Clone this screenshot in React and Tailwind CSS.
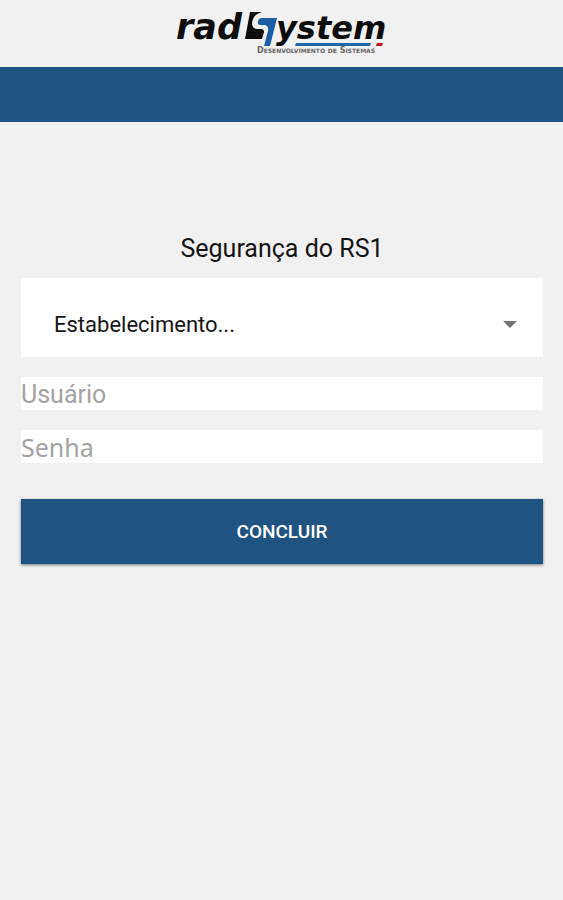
import React from "react";

function Logo() {
  return (
    <svg
      className="w-[225px] h-[60px] overflow-visible"
      viewBox="0 0 225 60"
      role="img"
      aria-label="RadSystem Desenvolvimento de Sistemas"
    >
      <g
        fontFamily="DejaVu Sans, sans-serif"
        fontWeight="bold"
        fontStyle="italic"
        fill="#0c0c0c"
      >
        <text x="7" y="39" fontSize="35">
          rad
        </text>
        <text x="107" y="39" fontSize="32">
          ystem
        </text>
      </g>
      {/* two-tone S */}
      <path
        d="M81 12H93Q86 14 84 19Q81 28 88 29H92Q95 29 95 32L93 39H76Z"
        fill="#0c0c0c"
      />
      <path
        d="M93 18H108L101 46H95L99 31Q100 26 96 25H91Q88 24 89 21Q90 18 93 18Z"
        fill="#1c5fa4"
      />
      <path d="M127 43h75l-1 3h-75z" fill="#2467a8" />
      <path d="M208 43h6l-1 3h-6z" fill="#c4161c" />
      <text
        x="88"
        y="53"
        fontFamily="DejaVu Sans, sans-serif"
        fontWeight="bold"
        fontSize="8"
        fill="#666"
        style={{ fontVariant: "small-caps" }}
      >
        Desenvolvimento de Sistemas
      </text>
    </svg>
  );
}

function App() {
  return (
    <div className="min-h-screen bg-[#f1f1f1] font-['Roboto',sans-serif]">
      <header>
        <div className="flex justify-center pb-[7px]">
          <Logo />
        </div>
        <div className="h-[55px] bg-[#1f5382]"></div>
      </header>

      <main className="pl-[21px] pr-5 pt-[110px]">
        <h1 className="text-center text-[25px] leading-[34px] text-[#151515]">
          Segurança do RS1
        </h1>

        <form className="mt-3" onSubmit={(e) => e.preventDefault()}>
          <div className="relative">
            <select
              aria-label="Estabelecimento"
              className="block w-full h-[79px] appearance-none bg-white pl-[33px] pr-16 pt-[14px] text-[22px] text-[#151515] outline-none"
            >
              <option>Estabelecimento...</option>
            </select>
            <svg
              className="pointer-events-none absolute right-[26px] top-[43px] w-[14px] h-[7px]"
              viewBox="0 0 14 7"
              fill="#757575"
            >
              <path d="M0 0h14L7 7z" />
            </svg>
          </div>

          <input
            type="text"
            aria-label="Usuário"
            placeholder="Usuário"
            className="mt-5 block w-full h-[33px] bg-white pt-[2px] text-[25px] leading-[30px] text-[#151515] placeholder:text-[#a3a3a3] outline-none"
          />
          <input
            type="password"
            aria-label="Senha"
            placeholder="Senha"
            className="mt-5 block w-full h-[33px] bg-white font-['Noto_Sans',sans-serif] text-[25px] leading-[30px] text-[#151515] placeholder:text-[#a3a3a3] outline-none"
          />

          <button
            type="submit"
            className="mt-9 block w-full h-[65px] bg-[#1f5382] pt-[2px] text-[19px] font-medium text-white shadow-[0_1px_3px_rgba(0,0,0,0.5)]"
          >
            CONCLUIR
          </button>
        </form>
      </main>
    </div>
  );
}

export default App;
